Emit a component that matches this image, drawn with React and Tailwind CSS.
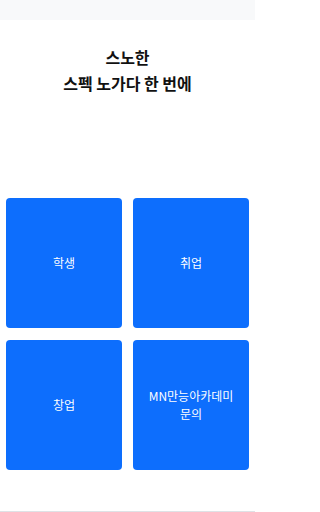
export default function App() {
  const items = ["학생", "취업", "창업", "MN만능아카데미 문의"]

  return (
    <div
      className="w-[255px] min-h-[512px] bg-white flex flex-col"
      style={{ fontFamily: '"Noto Sans CJK KR", "Noto Sans", sans-serif' }}
    >
      <div className="h-[20px] bg-[#f8f9fa]" />

      <h1 className="mt-[24px] text-center text-[16px] font-bold leading-[26px] text-[#111]">
        스노한
        <br />
        스펙 노가다 한 번에
      </h1>

      <div className="mt-[102px] grid grid-cols-2 gap-x-[11px] gap-y-[12px] px-[6px]">
        {items.map((label) => (
          <button
            key={label}
            className="h-[130px] min-w-0 rounded-[4px] bg-[#0d6efd] px-[12px] text-center text-[12px] leading-[18px] text-white flex items-center justify-center"
          >
            {label}
          </button>
        ))}
      </div>

      <div className="mt-auto h-[1px] bg-[#dee2e6]" />
    </div>
  )
}
